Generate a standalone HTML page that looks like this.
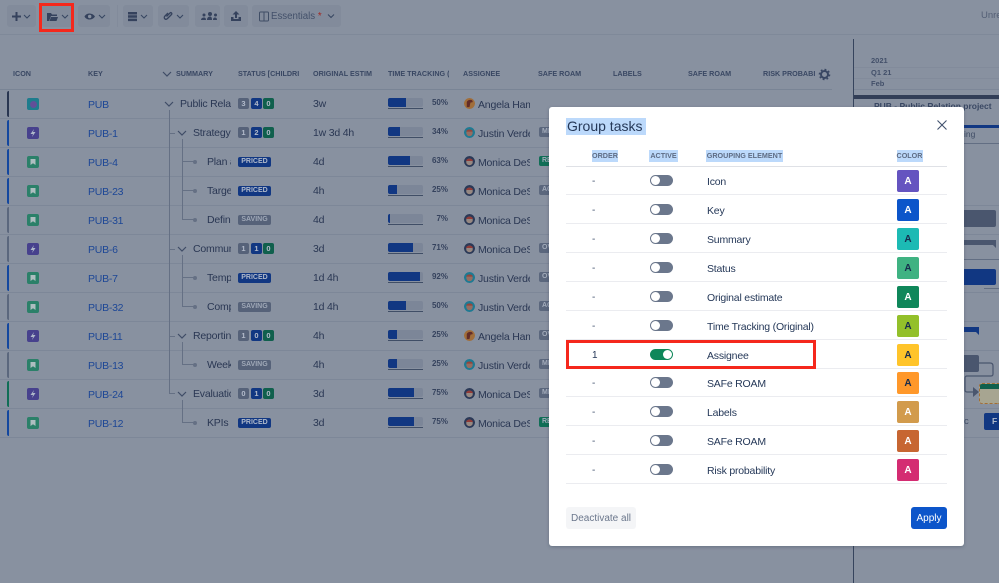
<!DOCTYPE html>
<html><head><meta charset="utf-8"><style>
*{box-sizing:border-box}
html,body{margin:0;padding:0;background:#99a2b1}
body{width:999px;height:583px;overflow:hidden;position:relative;font-family:"Liberation Sans",sans-serif;color:#2d3b59;font-size:10px}
#w{position:absolute;left:0;top:0;width:999px;height:583px;overflow:hidden;background:#99a2b1;filter:blur(.35px)}
.a{position:absolute}
.btn{position:absolute;top:5px;height:22px;background:#929cac;border-radius:3px}
.th{position:absolute;top:69px;font-size:7.2px;font-weight:bold;color:#3f4e6b;white-space:nowrap;line-height:9px}
.row{position:absolute;left:0;width:549px;height:29px;border-bottom:1px solid #8d97a8}
.bar{position:absolute;left:7px;top:1px;bottom:1px;width:2px;border-radius:2px 0 0 2px}
.ic{position:absolute;left:27px;top:8px;width:12px;height:12px;border-radius:2px}
.key{position:absolute;left:88px;top:7.5px;color:#1f4ea6;font-size:10.5px;letter-spacing:-.25px;line-height:14px}
.s{position:absolute;top:7px;line-height:14px;white-space:nowrap;overflow:hidden;font-size:10.5px;letter-spacing:-.2px}
.loz{position:absolute;left:238px;top:8.5px;height:10px;border-radius:2px;color:#c6d0e2;font-weight:bold;font-size:7px;line-height:10px;padding:0 3px;width:33px;text-align:center}
.n{position:absolute;top:8px;width:11px;height:11px;border-radius:2px;color:#c9d2e2;font-weight:bold;font-size:7.5px;line-height:11px;text-align:center}
.est{position:absolute;left:313px;top:7px;line-height:14px;font-size:10.5px;letter-spacing:-.2px}
.pb{position:absolute;left:388px;top:8px;width:35px;height:9px;background:#8c96a8;border-radius:2px}
.pb i{display:block;height:9px;background:#113b8f;border-radius:2px 0 0 2px}
.pu{position:absolute;left:388px;top:18px;width:35px;height:1px;background:#47556f}
.pc{position:absolute;left:420px;width:28px;text-align:right;top:8px;font-size:8px;font-weight:bold;color:#3a4865;line-height:10px}
.av{position:absolute;left:463.5px;top:8px;width:11px;height:11px;border-radius:50%}
.nm{position:absolute;left:478px;top:7.5px;width:52px;overflow:hidden;white-space:nowrap;line-height:14px;font-size:10.5px;letter-spacing:-.2px}
.sf{position:absolute;left:539px;top:8px;width:24px;height:10px;border-radius:2px;background:#667289;color:#b8c1d0;font-size:7px;font-weight:bold;line-height:10px;padding-left:3px}
.vl{position:absolute;background:#717d91;width:1.4px}
.hl{position:absolute;background:#717d91;height:1px}
.dot{position:absolute;width:4px;height:4px;border-radius:50%;background:#717d91}
.modal{position:absolute;left:549px;top:107px;width:415px;height:439px;background:#fff;border-radius:3px;box-shadow:0 1px 3px rgba(50,60,80,.35)}
.mh{position:absolute;top:43px;height:12px;background:#bcd9fb;color:#5e6c84;font-weight:bold;font-size:7.2px;line-height:12px;white-space:nowrap;text-align:center}
.mr{position:absolute;left:17px;width:381px;height:29px;border-bottom:1px solid #ebecf0}
.mr .o{position:absolute;left:26px;top:9px;line-height:14px;color:#42526e}
.mr .t{position:absolute;left:84px;top:9px;width:23px;height:11px;border-radius:6px;background:#6b778c}
.mr .t i{position:absolute;left:1px;top:1px;width:9px;height:9px;border-radius:50%;background:#fff}
.mr .l{position:absolute;left:141px;top:8.5px;line-height:14px;color:#253858;font-size:10.5px;letter-spacing:-.2px;white-space:nowrap}
.mr .c{position:absolute;left:331px;top:4px;width:22px;height:22px;border-radius:2px;font-weight:bold;font-size:10px;line-height:23px;text-align:center;color:#fff}
.red{position:absolute;border:3px solid #f5281c}
.gl{position:absolute;left:854px;right:0;height:1px;background:#8d97a8}
</style></head><body>
<svg width="0" height="0" style="position:absolute"><defs>
<symbol id="bolt" viewBox="0 0 12 12"><path d="M7 2 3.500 7H6L5 10 8.500 5H6z" fill="#c5cfe0"/></symbol>
<symbol id="mark" viewBox="0 0 12 12"><path d="M3.500 3h5v6L6 7.300 3.500 9z" fill="#c5d6d6"/></symbol>
<symbol id="chev" viewBox="0 0 10 6"><path d="M1 1l4 4 4-4" fill="none" stroke="#45536f" stroke-width="1.200"/></symbol>
<symbol id="ang" viewBox="0 0 12 12"><circle cx="6" cy="6" r="6" fill="#b67a3c"/><path d="M3 10V5c0-2 2-3 4-3s2.500 1 2.500 2.500L7 5 6 10z" fill="#6e2f28"/></symbol>
<symbol id="jus" viewBox="0 0 12 12"><circle cx="6" cy="6" r="6" fill="#1f88a3"/><circle cx="6" cy="6.500" r="3.500" fill="#a87a6a"/><path d="M2.500 5c0-3 7-3 7 0z" fill="#a84b3d"/></symbol>
<symbol id="mon" viewBox="0 0 12 12"><circle cx="6" cy="6" r="6" fill="#2e3d5e"/><circle cx="6" cy="6.500" r="3.600" fill="#a9988f"/><path d="M2.300 5.500c0-3.500 7.400-3.500 7.400 0z" fill="#a6413a"/></symbol>
</defs></svg>
<div id="w">

<!-- toolbar -->
<div class="btn" style="left:7px;width:29px"></div>
<div class="btn" style="left:42px;width:30px"></div>
<div class="btn" style="left:78px;width:32px"></div>
<div class="a" style="left:117px;top:5px;width:1px;height:22px;background:#929cac"></div>
<div class="btn" style="left:123px;width:30px"></div>
<div class="btn" style="left:158px;width:31px"></div>
<div class="btn" style="left:195px;width:25px"></div>
<div class="btn" style="left:224px;width:24px"></div>
<div class="btn" style="left:252px;width:89px"></div>
<svg class="a" style="left:0;top:0" width="345" height="34" fill="none">
<path d="M12 16.500h9M16.500 12v9" stroke="#3a4865" stroke-width="2"/>
<path d="M24 15l3 3 3-3M62 15l3 3 3-3M99 15l3 3 3-3M141 15l3 3 3-3M177 15l3 3 3-3M328 14.500l3 3 3-3" stroke="#3f4e6b" stroke-width="1.100"/>
<path d="M47 21v-8h4l1 1.500h5V16h-6l-2 5zM49.500 21l1.500-4h7l-1.500 4z" fill="#3a4865"/>
<path d="M84.500 16.500c2-4 8-4 10.500 0-2.500 4-8.500 4-10.500 0z" fill="#3a4865"/><circle cx="89.700" cy="16.500" r="1.700" fill="#99a2b1"/>
<path d="M128 12h9v2.500h-9zM128 15.300h9v2.500h-9zM128 18.600h9v2.500h-9z" fill="#3a4865"/>
<path d="M168 13l-3 3c-2 2 .5 4.500 2.500 2.500l4-4c1-1-.5-2.500-1.500-1.500l-3.500 3.500" stroke="#3a4865" stroke-width="1.300"/>
<path d="M201 20c0-2 2-2.500 3-2.500s2 .5 2 2.500zM207 20c0-3 2-3.500 3-3.500s2 .5 2 3.500zM213 20c0-2 1-2.500 2-2.500s2 .5 2 2.500z" fill="#3a4865"/>
<circle cx="204" cy="15" r="1.500" fill="#3a4865"/><circle cx="210" cy="14" r="2" fill="#3a4865"/><circle cx="215.500" cy="15" r="1.500" fill="#3a4865"/>
<path d="M231 17v4h10v-4h-2.500v2h-5v-2z" fill="#3a4865"/><path d="M236 11l3.500 3.500H237V18h-2v-3.500h-2.500z" fill="#3a4865"/>
<rect x="259.500" y="12" width="9" height="9" rx="1" stroke="#47556f"/><path d="M264 12v9" stroke="#47556f"/>
</svg>
<div class="a" style="left:271px;top:10px;font-size:9.700px;line-height:14px;color:#4a5873;white-space:nowrap">Essentials <span style="color:#b8281f">*</span></div>
<div class="a" style="left:981px;top:9px;line-height:14px;color:#5d6980;font-size:9.500px">Unre</div>
<div class="a" style="left:0;top:34px;width:999px;height:1px;background:#8f99a9"></div>

<!-- table header -->
<div class="th" style="left:13px">ICON</div>
<div class="th" style="left:88px">KEY</div>
<svg class="a" style="left:162px;top:71px" width="10" height="6"><use href="#chev"/></svg>
<div class="th" style="left:176px">SUMMARY</div>
<div class="th" style="left:238px;width:62px;overflow:hidden">STATUS [CHILDRI</div>
<div class="th" style="left:313px">ORIGINAL ESTIM</div>
<div class="th" style="left:388px;width:61px;overflow:hidden">TIME TRACKING (O</div>
<div class="th" style="left:463px">ASSIGNEE</div>
<div class="th" style="left:538px">SAFE ROAM</div>
<div class="th" style="left:613px">LABELS</div>
<div class="th" style="left:688px">SAFE ROAM</div>
<div class="th" style="left:763px">RISK PROBABI</div>
<svg class="a" style="left:818px;top:68px" width="13" height="13"><circle cx="6.500" cy="6.500" r="3.500" fill="none" stroke="#3f4e6b" stroke-width="2"/><circle cx="6.500" cy="6.500" r="5" fill="none" stroke="#3f4e6b" stroke-width="1.600" stroke-dasharray="1.800 2.100"/></svg>
<div class="a" style="left:0;top:89px;width:832px;height:1px;background:#8893a5"></div>

<!-- rows -->
<div class="row" style="top:90px;width:832px"><div class="bar" style="background:#2c3a57"></div><div class="ic" style="background:#1f8a9c"><div class="a" style="left:2.500px;top:2.500px;width:7px;height:7px;border-radius:50%;background:#6c57a8"></div></div><div class="key">PUB</div><svg class="a" style="left:164px;top:11px" width="10" height="6"><use href="#chev"/></svg><div class="s" style="left:180px;width:51px">Public Relations</div><div class="n" style="left:238px;background:#606d85">3</div><div class="n" style="left:251px;background:#113b8f">4</div><div class="n" style="left:263px;background:#0f6a52">0</div><div class="est">3w</div><div class="pb"><i style="width:50%"></i></div><div class="pu"></div><div class="pc">50%</div><svg class="av"><use href="#ang"/></svg><div class="nm">Angela Hamilton</div></div>
<div class="row" style="top:119px"><div class="bar" style="background:#134eb0"></div><div class="ic" style="background:#4f479c"><svg width="12" height="12"><use href="#bolt"/></svg></div><div class="key">PUB-1</div><svg class="a" style="left:177px;top:11px" width="10" height="6"><use href="#chev"/></svg><div class="s" style="left:193px;width:38px">Strategy</div><div class="n" style="left:238px;background:#606d85">1</div><div class="n" style="left:251px;background:#113b8f">2</div><div class="n" style="left:263px;background:#0f6a52">0</div><div class="est">1w 3d 4h</div><div class="pb"><i style="width:34%"></i></div><div class="pu"></div><div class="pc">34%</div><svg class="av"><use href="#jus"/></svg><div class="nm">Justin Verdelli</div><div class="sf">MI</div></div>
<div class="row" style="top:148px"><div class="bar" style="background:#134eb0"></div><div class="ic" style="background:#2f8f72"><svg width="12" height="12"><use href="#mark"/></svg></div><div class="key">PUB-4</div><div class="s" style="left:207px;width:24px">Plan and</div><div class="loz" style="background:#113b8f">PRICED</div><div class="est">4d</div><div class="pb"><i style="width:63%"></i></div><div class="pu"></div><div class="pc">63%</div><svg class="av"><use href="#mon"/></svg><div class="nm">Monica DeSilva</div><div class="sf" style="background:#0f7a5c">RE</div></div>
<div class="row" style="top:177px"><div class="bar" style="background:#134eb0"></div><div class="ic" style="background:#2f8f72"><svg width="12" height="12"><use href="#mark"/></svg></div><div class="key">PUB-23</div><div class="s" style="left:207px;width:24px">Target</div><div class="loz" style="background:#113b8f">PRICED</div><div class="est">4h</div><div class="pb"><i style="width:25%"></i></div><div class="pu"></div><div class="pc">25%</div><svg class="av"><use href="#mon"/></svg><div class="nm">Monica DeSilva</div><div class="sf">AC</div></div>
<div class="row" style="top:206px"><div class="bar" style="background:#667289"></div><div class="ic" style="background:#2f8f72"><svg width="12" height="12"><use href="#mark"/></svg></div><div class="key">PUB-31</div><div class="s" style="left:207px;width:24px">Define</div><div class="loz" style="background:#606d85;color:#b4bdcc">SAVING</div><div class="est">4d</div><div class="pb"><i style="width:7%"></i></div><div class="pu"></div><div class="pc">7%</div><svg class="av"><use href="#mon"/></svg><div class="nm">Monica DeSilva</div></div>
<div class="row" style="top:235px"><div class="bar" style="background:#667289"></div><div class="ic" style="background:#4f479c"><svg width="12" height="12"><use href="#bolt"/></svg></div><div class="key">PUB-6</div><svg class="a" style="left:177px;top:11px" width="10" height="6"><use href="#chev"/></svg><div class="s" style="left:193px;width:38px">Communic</div><div class="n" style="left:238px;background:#606d85">1</div><div class="n" style="left:251px;background:#113b8f">1</div><div class="n" style="left:263px;background:#0f6a52">0</div><div class="est">3d</div><div class="pb"><i style="width:71%"></i></div><div class="pu"></div><div class="pc">71%</div><svg class="av"><use href="#mon"/></svg><div class="nm">Monica DeSilva</div><div class="sf">OV</div></div>
<div class="row" style="top:264px"><div class="bar" style="background:#134eb0"></div><div class="ic" style="background:#2f8f72"><svg width="12" height="12"><use href="#mark"/></svg></div><div class="key">PUB-7</div><div class="s" style="left:207px;width:24px">Template</div><div class="loz" style="background:#113b8f">PRICED</div><div class="est">1d 4h</div><div class="pb"><i style="width:92%"></i></div><div class="pu"></div><div class="pc">92%</div><svg class="av"><use href="#jus"/></svg><div class="nm">Justin Verdelli</div><div class="sf">OV</div></div>
<div class="row" style="top:293px"><div class="bar" style="background:#667289"></div><div class="ic" style="background:#2f8f72"><svg width="12" height="12"><use href="#mark"/></svg></div><div class="key">PUB-32</div><div class="s" style="left:207px;width:24px">Compare</div><div class="loz" style="background:#606d85;color:#b4bdcc">SAVING</div><div class="est">1d 4h</div><div class="pb"><i style="width:50%"></i></div><div class="pu"></div><div class="pc">50%</div><svg class="av"><use href="#jus"/></svg><div class="nm">Justin Verdelli</div><div class="sf">AC</div></div>
<div class="row" style="top:322px"><div class="bar" style="background:#134eb0"></div><div class="ic" style="background:#4f479c"><svg width="12" height="12"><use href="#bolt"/></svg></div><div class="key">PUB-11</div><svg class="a" style="left:177px;top:11px" width="10" height="6"><use href="#chev"/></svg><div class="s" style="left:193px;width:38px">Reporting</div><div class="n" style="left:238px;background:#606d85">1</div><div class="n" style="left:251px;background:#113b8f">0</div><div class="n" style="left:263px;background:#0f6a52">0</div><div class="est">4h</div><div class="pb"><i style="width:25%"></i></div><div class="pu"></div><div class="pc">25%</div><svg class="av"><use href="#ang"/></svg><div class="nm">Angela Hamilton</div><div class="sf">OV</div></div>
<div class="row" style="top:351px"><div class="bar" style="background:#667289"></div><div class="ic" style="background:#2f8f72"><svg width="12" height="12"><use href="#mark"/></svg></div><div class="key">PUB-13</div><div class="s" style="left:207px;width:24px">Weekly</div><div class="loz" style="background:#606d85;color:#b4bdcc">SAVING</div><div class="est">4h</div><div class="pb"><i style="width:25%"></i></div><div class="pu"></div><div class="pc">25%</div><svg class="av"><use href="#jus"/></svg><div class="nm">Justin Verdelli</div><div class="sf">MI</div></div>
<div class="row" style="top:380px"><div class="bar" style="background:#0f7a5c"></div><div class="ic" style="background:#4f479c"><svg width="12" height="12"><use href="#bolt"/></svg></div><div class="key">PUB-24</div><svg class="a" style="left:177px;top:11px" width="10" height="6"><use href="#chev"/></svg><div class="s" style="left:193px;width:38px">Evaluation</div><div class="n" style="left:238px;background:#606d85">0</div><div class="n" style="left:251px;background:#113b8f">1</div><div class="n" style="left:263px;background:#0f6a52">0</div><div class="est">3d</div><div class="pb"><i style="width:75%"></i></div><div class="pu"></div><div class="pc">75%</div><svg class="av"><use href="#mon"/></svg><div class="nm">Monica DeSilva</div><div class="sf">MI</div></div>
<div class="row" style="top:409px"><div class="bar" style="background:#134eb0"></div><div class="ic" style="background:#2f8f72"><svg width="12" height="12"><use href="#mark"/></svg></div><div class="key">PUB-12</div><div class="s" style="left:207px;width:24px">KPIs of</div><div class="loz" style="background:#113b8f">PRICED</div><div class="est">3d</div><div class="pb"><i style="width:75%"></i></div><div class="pu"></div><div class="pc">75%</div><svg class="av"><use href="#mon"/></svg><div class="nm">Monica DeSilva</div><div class="sf" style="background:#0f7a5c">RE</div></div>

<!-- tree lines -->
<div class="vl" style="left:169px;top:110px;height:284px"></div>
<div class="hl" style="left:170px;top:133px;width:5px"></div>
<div class="hl" style="left:170px;top:249px;width:5px"></div>
<div class="hl" style="left:170px;top:336px;width:5px"></div>
<div class="hl" style="left:170px;top:393px;width:5px"></div>
<div class="vl" style="left:182px;top:139px;height:81px"></div>
<div class="vl" style="left:182px;top:255px;height:52px"></div>
<div class="vl" style="left:182px;top:342px;height:23px"></div>
<div class="vl" style="left:182px;top:400px;height:23px"></div>
<div class="hl" style="left:182px;top:161px;width:12px"></div><div class="dot" style="left:193px;top:159.500px"></div>
<div class="hl" style="left:182px;top:190px;width:12px"></div><div class="dot" style="left:193px;top:188.500px"></div>
<div class="hl" style="left:182px;top:219px;width:12px"></div><div class="dot" style="left:193px;top:217.500px"></div>
<div class="hl" style="left:182px;top:277px;width:12px"></div><div class="dot" style="left:193px;top:275.500px"></div>
<div class="hl" style="left:182px;top:306px;width:12px"></div><div class="dot" style="left:193px;top:304.500px"></div>
<div class="hl" style="left:182px;top:364px;width:12px"></div><div class="dot" style="left:193px;top:362.500px"></div>
<div class="hl" style="left:182px;top:422px;width:12px"></div><div class="dot" style="left:193px;top:420.500px"></div>

<!-- gantt -->
<div class="a" style="left:853px;top:39px;width:1px;height:544px;background:#3b4a64"></div>
<div class="a" style="left:871px;top:56px;font-size:7.500px;font-weight:bold;line-height:10px;color:#4a5873">2021</div>
<div class="a" style="left:871px;top:68px;font-size:7.500px;font-weight:bold;line-height:10px;color:#4a5873">Q1 21</div>
<div class="a" style="left:871px;top:79px;font-size:7.500px;font-weight:bold;line-height:10px;color:#4a5873">Feb</div>
<div class="gl" style="top:67px;background:#929cac"></div>
<div class="gl" style="top:78px;background:#929cac"></div>
<div class="gl" style="top:89px"></div>
<div class="a" style="left:854px;top:95px;width:145px;height:4px;background:#36435e"></div>
<div class="a" style="left:874px;top:101px;font-size:8.500px;font-weight:bold;line-height:10px;color:#3f4e6b;white-space:nowrap">PUB - Public Relation project</div>
<div class="a" style="left:960px;top:125px;width:39px;height:3px;background:#113b8f"></div>
<div class="a" style="left:964px;top:129px;font-size:8.500px;color:#47556f;line-height:11px">ing</div>
<div class="gl" style="left:960px;top:143px;height:1px;background:#6e7a90"></div>
<div class="gl" style="left:960px;top:205px"></div><div class="gl" style="left:960px;top:234px"></div><div class="gl" style="left:960px;top:292px"></div><div class="gl" style="left:960px;top:321px"></div><div class="gl" style="left:960px;top:350px"></div><div class="gl" style="left:960px;top:408px"></div><div class="gl" style="left:960px;top:437px"></div>
<div class="a" style="left:960px;top:210px;width:36px;height:17px;background:#525f78;border-radius:2px"></div>
<svg class="a" style="left:960px;top:238px" width="39" height="12"><path d="M0 2h36v8l-3-3H0z" fill="#525f78"/></svg>
<div class="a" style="left:960px;top:259px;width:39px;height:1px;background:#6e7a90"></div>
<div class="a" style="left:960px;top:269px;width:36px;height:16px;background:#113b8f;border-radius:2px"></div>
<div class="a" style="left:984px;top:288px;width:15px;height:1px;background:#6e7a90"></div>
<svg class="a" style="left:960px;top:325px" width="22" height="12"><path d="M0 2h19v8l-3-3H0z" fill="#113b8f"/></svg>
<div class="a" style="left:960px;top:355px;width:19px;height:17px;background:#525f78;border-radius:2px"></div>
<svg class="a" style="left:960px;top:355px" width="39" height="50" fill="none"><path d="M19 8h11q3 0 3 3v8q0 2-2 2H7q-2 0-2 2v12q0 2 2 2h7" stroke="#525f78" stroke-width="1.200"/><path d="M13 32l6 5-6 5z" fill="#525f78"/></svg>
<div class="a" style="left:979px;top:383px;width:20px;height:21px;background:#bdb9a0;border:1px dashed #b87a35;border-right:0;border-radius:3px 0 0 3px"></div>
<div class="a" style="left:980px;top:384px;width:19px;height:5px;background:#0f6a52;border-radius:2px 0 0 0"></div>
<div class="a" style="left:964px;top:416px;color:#47556f;line-height:11px;font-size:9.500px">c</div>
<div class="a" style="left:984px;top:413px;width:15px;height:17px;background:#113b8f;border-radius:2px 0 0 2px;color:#c6d0e2;font-weight:bold;font-size:8.500px;line-height:17px;padding-left:8px">F</div>

<!-- dim layer -->
<div class="a" style="left:0;top:0;width:999px;height:583px;background:rgba(20,30,50,.13)"></div>
<div class="red" style="left:39px;top:3px;width:35px;height:29px"></div>

<!-- modal -->
<div class="modal">
<div class="a" style="left:17px;top:11px;width:80px;height:17px;background:#bcd9fb;font-size:14px;line-height:17px;color:#253858;white-space:nowrap;padding-left:1px">Group tasks</div>
<svg class="a" style="left:388px;top:13px" width="10" height="10"><path d="M.5.500l9 9M9.500.500l-9 9" stroke="#42526e" stroke-width="1.100"/></svg>
<div class="mh" style="left:43px;width:26px">ORDER</div>
<div class="mh" style="left:100px;width:29px">ACTIVE</div>
<div class="mh" style="left:157px;width:77px">GROUPING ELEMENT</div>
<div class="mh" style="left:347.500px;width:26px">COLOR</div>
<div class="a" style="left:17px;top:59px;width:381px;height:1px;background:#dfe1e6"></div>
<div class="mr" style="top:59px"><div class="o">-</div><div class="t"><i></i></div><div class="l">Icon</div><div class="c" style="background:#6554c0">A</div></div>
<div class="mr" style="top:88px"><div class="o">-</div><div class="t"><i></i></div><div class="l">Key</div><div class="c" style="background:#0c55ca">A</div></div>
<div class="mr" style="top:117px"><div class="o">-</div><div class="t"><i></i></div><div class="l">Summary</div><div class="c" style="background:#1cbab4;color:#172b4d">A</div></div>
<div class="mr" style="top:146px"><div class="o">-</div><div class="t"><i></i></div><div class="l">Status</div><div class="c" style="background:#3fb282;color:#172b4d">A</div></div>
<div class="mr" style="top:175px"><div class="o">-</div><div class="t"><i></i></div><div class="l">Original estimate</div><div class="c" style="background:#0f875a">A</div></div>
<div class="mr" style="top:204px"><div class="o">-</div><div class="t"><i></i></div><div class="l">Time Tracking (Original)</div><div class="c" style="background:#93c02a;color:#172b4d">A</div></div>
<div class="mr" style="top:233px"><div class="o" style="color:#253858">1</div><div class="t" style="background:#0f875a"><i style="left:13px"></i></div><div class="l">Assignee</div><div class="c" style="background:#ffc42a;color:#172b4d">A</div></div>
<div class="mr" style="top:261px"><div class="o">-</div><div class="t"><i></i></div><div class="l">SAFe ROAM</div><div class="c" style="background:#ff982a;color:#172b4d">A</div></div>
<div class="mr" style="top:290px"><div class="o">-</div><div class="t"><i></i></div><div class="l">Labels</div><div class="c" style="background:#d29b4c">A</div></div>
<div class="mr" style="top:319px"><div class="o">-</div><div class="t"><i></i></div><div class="l">SAFe ROAM</div><div class="c" style="background:#c76632">A</div></div>
<div class="mr" style="top:348px"><div class="o">-</div><div class="t"><i></i></div><div class="l">Risk probability</div><div class="c" style="background:#d42c72">A</div></div>
<div class="a" style="left:17px;top:400px;width:70px;height:22px;background:#f4f5f7;border-radius:3px;color:#6b778c;text-align:center;line-height:23px;font-size:10px">Deactivate all</div>
<div class="a" style="left:362px;top:400px;width:36px;height:22px;background:#0c55ca;border-radius:3px;color:#fff;text-align:center;line-height:23px;font-size:10px">Apply</div>
</div>
<div class="red" style="left:566px;top:340px;width:250px;height:29px"></div>
</div>
</body></html>
